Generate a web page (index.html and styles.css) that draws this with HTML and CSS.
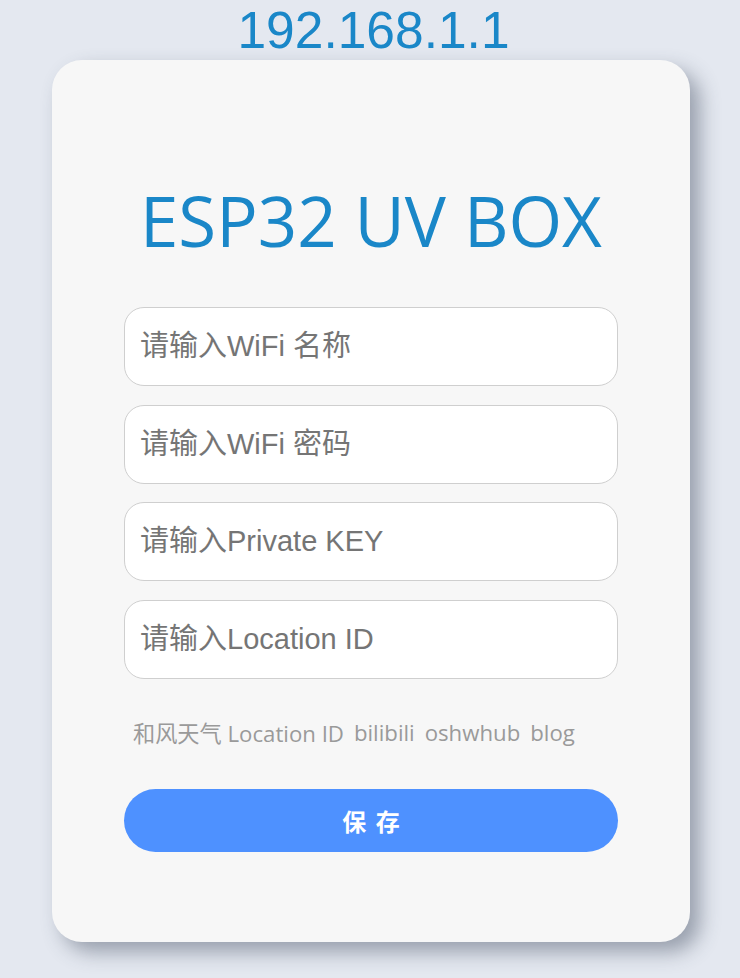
FILE: index.html
```html
<!DOCTYPE html>
<html lang="zh">
<head>
<meta charset="utf-8">
<title>ESP32 UV BOX</title>
<link rel="stylesheet" href="styles.css">
</head>
<body>
<div class="ip">192.168.1.1</div>
<div class="card">
  <h1 class="title">ESP32 UV BOX</h1>
  <form class="form">
    <input class="field" type="text" placeholder="请输入WiFi 名称">
    <input class="field" type="text" placeholder="请输入WiFi 密码">
    <input class="field" type="text" placeholder="请输入Private KEY">
    <input class="field" type="text" placeholder="请输入Location ID">
    <div class="links">
      <a class="link" href="#">和风天气 Location ID</a>
      <a class="link" href="#">bilibili</a>
      <a class="link" href="#">oshwhub</a>
      <a class="link" href="#">blog</a>
    </div>
    <button class="save" type="button">保 存</button>
  </form>
</div>
</body>
</html>
```
FILE: styles.css
```css
html, body {
  margin: 0;
  padding: 0;
}
body {
  background: #e4e8f0;
  font-family: "Open Sans", "Noto Sans CJK SC", sans-serif;
  min-height: 978px;
}
.ip {
  height: 60px;
  line-height: 60px;
  text-align: center;
  font-family: "Liberation Sans", Arial, sans-serif;
  font-size: 51.5px;
  color: #1a87c8;
  padding-left: 7px;
}
.card {
  width: 638px;
  height: 882px;
  margin: 0 0 0 52px;
  box-sizing: border-box;
  background: #f7f7f7;
  border-radius: 30px;
  box-shadow: 10px 10px 20px rgba(60, 70, 90, 0.45);
  padding-top: 110px;
}
.title {
  margin: 0;
  text-align: center;
  font-family: "Open Sans", "Noto Sans CJK SC", sans-serif;
  font-weight: 400;
  font-size: 69px;
  line-height: 100px;
  color: #1a87c8;
}
.form {
  width: 494px;
  margin: 37px auto 0;
  display: flex;
  flex-direction: column;
}
.field {
  height: 79px;
  box-sizing: border-box;
  border: 1px solid #cfcfcf;
  border-radius: 20px;
  background: #fff;
  padding: 0 15px;
  font-family: "Liberation Sans", "Noto Sans CJK SC", sans-serif;
  font-size: 29px;
  color: #333;
  margin-bottom: 18.5px;
  outline: none;
}
.field::placeholder {
  color: #757575;
}
.links {
  display: flex;
  gap: 10px;
  padding-left: 9px;
  margin-top: 15px;
  height: 40px;
  align-items: center;
}
.link {
  font-family: "Open Sans", "Noto Sans CJK SC", sans-serif;
  font-size: 22.2px;
  color: #9a9a9a;
  text-decoration: none;
  white-space: nowrap;
}
.save {
  margin-top: 37px;
  height: 63px;
  border: none;
  border-radius: 32px;
  background: #4e91ff;
  color: #fff;
  font-family: "Noto Sans CJK SC", sans-serif;
  font-weight: 700;
  font-size: 24px;
  letter-spacing: 2px;
  padding-left: 8px;
}
```
